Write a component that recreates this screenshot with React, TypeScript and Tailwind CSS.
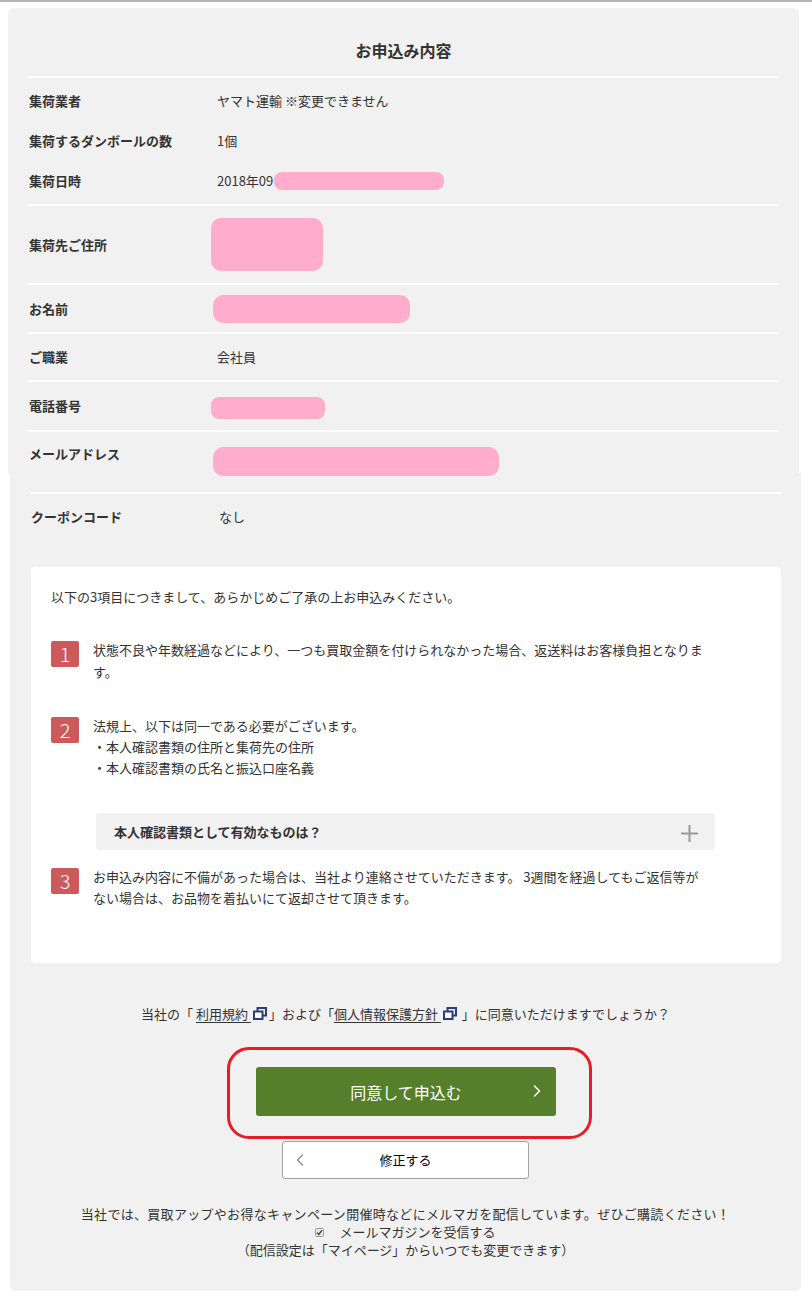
import { ChevronLeft, ChevronRight } from "lucide-react"

const font = { fontFamily: '"Noto Sans CJK JP", "Noto Sans", sans-serif' }

const Divider = ({ className = "" }: { className?: string }) => (
    <div className={`h-[2px] bg-white ${className}`} />
)

const Blot = ({ className }: { className: string }) => (
    <span className={`block rounded-[8px] bg-[#ffadca] ${className}`} />
)

const Label = ({ children }: { children: React.ReactNode }) => (
    <div className="w-[188px] shrink-0 font-bold leading-[20px]">{children}</div>
)

const Badge = ({ n }: { n: number }) => (
    <span className="mt-[2px] flex h-[26px] w-[28px] shrink-0 items-center justify-center rounded-[2px] bg-[#cd5a5a] text-[20px] font-light leading-none text-white">
        {n}
    </span>
)

const WindowIcon = () => (
    <svg width="14" height="13" viewBox="0 0 14 13" className="mx-[2px] inline-block align-[-1px]">
        <rect x="4.5" y="1" width="8.5" height="7.5" fill="none" stroke="#2b3d7b" strokeWidth="2" />
        <rect x="1" y="4.5" width="8.5" height="7.5" fill="#fff" stroke="#2b3d7b" strokeWidth="2" />
    </svg>
)

const App = () => {
    return (
        <div className="min-h-[1304px] w-full bg-white text-[13px] text-[#333]" style={font}>
            <div className="h-[2px] bg-[#b4b4b4]" />

            <div className="pt-[6px]">
                {/* upper half of the stitched panel */}
                <section className="ml-[8px] w-[791px] rounded-t-[6px] bg-[#f1f1f1]">
                    <div className="pt-[30px] pb-[14px] text-center text-[16px] font-bold leading-[24px]">
                        お申込み内容
                    </div>
                    <Divider className="mx-[20px]" />

                    <div className="flex flex-col gap-[20px] pt-[13px] pb-[13px] pl-[21px]">
                        <div className="flex leading-[20px]">
                            <Label>集荷業者</Label>
                            <div>ヤマト運輸 ※変更できません</div>
                        </div>
                        <div className="flex leading-[20px]">
                            <Label>集荷するダンボールの数</Label>
                            <div>1個</div>
                        </div>
                        <div className="flex items-center leading-[20px]">
                            <Label>集荷日時</Label>
                            <div className="flex items-center">
                                <span>2018年09</span>
                                <Blot className="ml-[1px] h-[18px] w-[170px]" />
                            </div>
                        </div>
                    </div>
                    <Divider className="mx-[20px]" />

                    <div className="flex h-[77px] items-center pl-[21px]">
                        <Label>集荷先ご住所</Label>
                        <Blot className="-ml-[6px] h-[53px] w-[112px] rounded-[10px]" />
                    </div>
                    <Divider className="mx-[20px]" />

                    <div className="flex h-[47px] items-center pl-[21px]">
                        <Label>お名前</Label>
                        <Blot className="-ml-[4px] h-[28px] w-[197px] rounded-[10px]" />
                    </div>
                    <Divider className="mx-[20px]" />

                    <div className="flex h-[46px] items-center pl-[21px] leading-[20px]">
                        <Label>ご職業</Label>
                        <div>会社員</div>
                    </div>
                    <Divider className="mx-[20px]" />

                    <div className="flex h-[48px] items-center pl-[21px]">
                        <Label>電話番号</Label>
                        <Blot className="-ml-[6px] mt-[3px] h-[22px] w-[114px]" />
                    </div>
                    <Divider className="mx-[20px]" />

                    <div className="flex h-[41px] items-start pl-[21px]">
                        <div className="pt-[12px]">
                            <Label>メールアドレス</Label>
                        </div>
                        <Blot className="relative z-10 -ml-[4px] mt-[15px] h-[29px] w-[286px] rounded-[10px]" />
                    </div>
                </section>

                {/* lower half of the stitched panel */}
                <section className="ml-[10px] w-[791px] rounded-b-[6px] bg-[#f1f1f1] pb-[32px]">
                    <div className="pt-[19px]">
                        <Divider className="ml-[21px] mr-[20px]" />
                    </div>
                    <div className="mt-[13px] flex pl-[21px] leading-[20px]">
                        <Label>クーポンコード</Label>
                        <div>なし</div>
                    </div>

                    <div className="mt-[40px] ml-[21px] mr-[20px] rounded-[4px] bg-white pt-[20px] pb-[55px] pl-[20px]">
                        <p className="leading-[20px]">以下の3項目につきまして、あらかじめご了承の上お申込みください。</p>

                        <div className="mt-[32px] flex gap-[14px]">
                            <Badge n={1} />
                            <p className="leading-[22px]">
                                状態不良や年数経過などにより、一つも買取金額を付けられなかった場合、返送料はお客様負担となりま
                                <br />
                                す。
                            </p>
                        </div>

                        <div className="mt-[32px] flex gap-[14px]">
                            <Badge n={2} />
                            <p className="leading-[21px]">
                                法規上、以下は同一である必要がございます。
                                <br />
                                ・本人確認書類の住所と集荷先の住所
                                <br />
                                ・本人確認書類の氏名と振込口座名義
                            </p>
                        </div>

                        <div className="mt-[35px] ml-[45px] flex h-[37px] w-[619px] items-center justify-between rounded-[4px] bg-[#f1f1f1] pl-[18px] pr-[17px]">
                            <span className="font-bold">本人確認書類として有効なものは？</span>
                            <svg width="17" height="17" viewBox="0 0 17 17" className="mt-[3px]">
                                <path d="M8.5 0v17M0 8.5h17" stroke="#999" strokeWidth="2" />
                            </svg>
                        </div>

                        <div className="mt-[16px] flex gap-[14px]">
                            <Badge n={3} />
                            <p className="leading-[21px]">
                                お申込み内容に不備があった場合は、当社より連絡させていただきます。 3週間を経過してもご返信等が
                                <br />
                                ない場合は、お品物を着払いにて返却させて頂きます。
                            </p>
                        </div>
                    </div>

                    <p className="mt-[41px] text-center leading-[20px]">
                        当社の「 <a className="underline underline-offset-[3px]">利用規約 <WindowIcon /></a>」および「<a className="underline underline-offset-[3px]">個人情報保護方針 <WindowIcon /></a> 」に同意いただけますでしょうか？
                    </p>

                    <div className="mt-[23px] flex justify-center">
                        <div className="ml-[8px] rounded-[22px] border-[3px] border-[#e41e26] pt-[17px] pr-[33px] pb-[20px] pl-[26px]">
                            <button className="relative flex h-[49px] w-[300px] items-center justify-center rounded-[3px] bg-[#557f2a] text-[16px] text-white">
                                同意して申込む
                                <ChevronRight size={20} strokeWidth={1.8} className="absolute right-[9px] top-[14px]" />
                            </button>
                        </div>
                    </div>

                    <div className="mt-[2px] flex justify-center">
                        <button className="relative flex h-[38px] w-[247px] items-center justify-center rounded-[3px] border border-[#a0a0a0] bg-white text-[13px] text-black">
                            修正する
                            <ChevronLeft size={20} strokeWidth={1.5} className="absolute left-[7px] top-[8px] text-[#888]" />
                        </button>
                    </div>

                    <div className="mt-[26px] text-center leading-[18px]">
                        <p className="tracking-[0.3px]">当社では、買取アップやお得なキャンペーン開催時などにメルマガを配信しています。ぜひご購読ください！</p>
                        <p className="flex items-center justify-center">
                            <svg width="9" height="9" viewBox="0 0 9 9" className="mr-[15px]">
                                <rect x="0.5" y="0.5" width="8" height="8" rx="1" fill="#e6e6e6" stroke="#9a9a9a" />
                                <path d="M2 4.6l1.7 1.8L7 2.4" fill="none" stroke="#333" strokeWidth="1.3" />
                            </svg>
                            メールマガジンを受信する
                        </p>
                        <p>（配信設定は「マイページ」からいつでも変更できます）</p>
                    </div>
                </section>
            </div>
        </div>
    )
}

export default App
